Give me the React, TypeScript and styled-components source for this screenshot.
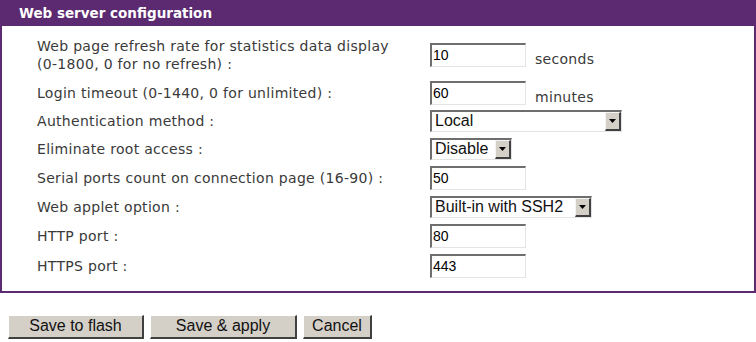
import React from 'react';
import styled, { createGlobalStyle } from 'styled-components';

const GlobalStyle = createGlobalStyle`
  body {
    margin: 0;
    background: #ffffff;
    font-family: "DejaVu Sans", Verdana, sans-serif;
  }
`;

const Page = styled.div`
  width: 756px;
  height: 342px;
  overflow: hidden;
`;

const Panel = styled.section`
  width: 756px;
  box-sizing: border-box;
  border: 2px solid #5c2a70;
  border-top: none;
`;

const Header = styled.div`
  height: 26px;
  background: #5c2a70;
  color: #ffffff;
  font-weight: bold;
  font-size: 13.5px;
  line-height: 27px;
  padding-left: 17px;
`;

// row heights follow the controls: inputs are 24px, drop-downs 22px
const Form = styled.div`
  display: grid;
  grid-template-columns: 393px auto;
  grid-template-rows: 40px 24px 22px 22px 24px 23px 24px 24px;
  row-gap: 5.7px;
  padding: 9px 0 13px 35px;
`;

const Label = styled.div`
  font-size: 14px;
  letter-spacing: 0.3px;
  color: #3a3a3a;
  line-height: 18px;
  display: flex;
  align-items: center;
  white-space: nowrap;
`;

const Field = styled.div`
  display: flex;
  align-items: center;
  gap: 9px;
`;

const TextBox = styled.div`
  width: 96px;
  height: 24px;
  box-sizing: border-box;
  border-top: 2px solid #6e6e6e;
  border-left: 2px solid #6e6e6e;
  border-right: 1px solid #e4e4e4;
  border-bottom: 1px solid #e4e4e4;
  font-family: "Liberation Sans", Arial, sans-serif;
  font-size: 14px;
  line-height: 20px;
  padding-left: 1px;
  color: #000;
  background: #fff;
`;

const Unit = styled.span`
  font-size: 14px;
  letter-spacing: 0.3px;
  color: #3a3a3a;
  padding-top: 8px;
`;

const SelectBox = styled.div<{ $w: number }>`
  width: ${(p) => p.$w}px;
  height: 22px;
  box-sizing: border-box;
  border-top: 2px solid #6e6e6e;
  border-left: 2px solid #6e6e6e;
  border-right: 1px solid #e4e4e4;
  border-bottom: 1px solid #e4e4e4;
  display: flex;
  align-items: stretch;
  background: #fff;
  font-family: "Liberation Sans", Arial, sans-serif;
  font-size: 16px;
  color: #111;
`;

const SelectText = styled.span`
  flex: 1;
  line-height: 18px;
  padding-left: 3px;
  white-space: nowrap;
  overflow: hidden;
`;

const Arrow = styled.span`
  width: 16px;
  flex-shrink: 0;
  box-sizing: border-box;
  background: #d4d0c8;
  border-top: 1px solid #f4f4f4;
  border-left: 1px solid #f4f4f4;
  border-right: 2px solid #404040;
  border-bottom: 2px solid #404040;
  display: flex;
  align-items: center;
  justify-content: center;
`;

const Buttons = styled.div`
  display: flex;
  gap: 6px;
  padding: 22px 0 0 8px;
`;

const Button = styled.button<{ $w: number }>`
  width: ${(p) => p.$w}px;
  height: 24px;
  box-sizing: border-box;
  background: #d4d0c8;
  border-top: 1px solid #ffffff;
  border-left: 1px solid #ffffff;
  border-right: 2px solid #404040;
  border-bottom: 2px solid #404040;
  font-family: "Liberation Sans", Arial, sans-serif;
  font-size: 16px;
  color: #111;
  padding: 0;
`;

const Select = ({ value, width }: { value: string; width: number }) => (
  <SelectBox $w={width}>
    <SelectText>{value}</SelectText>
    <Arrow>
      <svg width="7" height="4" viewBox="0 0 7 4">
        <path d="M0 0h7L3.5 4z" fill="#000" />
      </svg>
    </Arrow>
  </SelectBox>
);

export default function App() {
  return (
    <Page>
      <GlobalStyle />
      <Panel>
        <Header>Web server configuration</Header>
        <Form>
          <Label>
            Web page refresh rate for statistics data display
            <br />
            (0-1800, 0 for no refresh) :
          </Label>
          <Field>
            <TextBox>10</TextBox>
            <Unit>seconds</Unit>
          </Field>
          <Label>Login timeout (0-1440, 0 for unlimited) :</Label>
          <Field>
            <TextBox>60</TextBox>
            <Unit>minutes</Unit>
          </Field>
          <Label>Authentication method :</Label>
          <Field>
            <Select value="Local" width={192} />
          </Field>
          <Label>Eliminate root access :</Label>
          <Field>
            <Select value="Disable" width={82} />
          </Field>
          <Label>Serial ports count on connection page (16-90) :</Label>
          <Field>
            <TextBox>50</TextBox>
          </Field>
          <Label>Web applet option :</Label>
          <Field>
            <Select value="Built-in with SSH2" width={162} />
          </Field>
          <Label>HTTP port :</Label>
          <Field>
            <TextBox>80</TextBox>
          </Field>
          <Label>HTTPS port :</Label>
          <Field>
            <TextBox>443</TextBox>
          </Field>
        </Form>
      </Panel>
      <Buttons>
        <Button $w={136}>Save to flash</Button>
        <Button $w={147}>Save &amp; apply</Button>
        <Button $w={69}>Cancel</Button>
      </Buttons>
    </Page>
  );
}
